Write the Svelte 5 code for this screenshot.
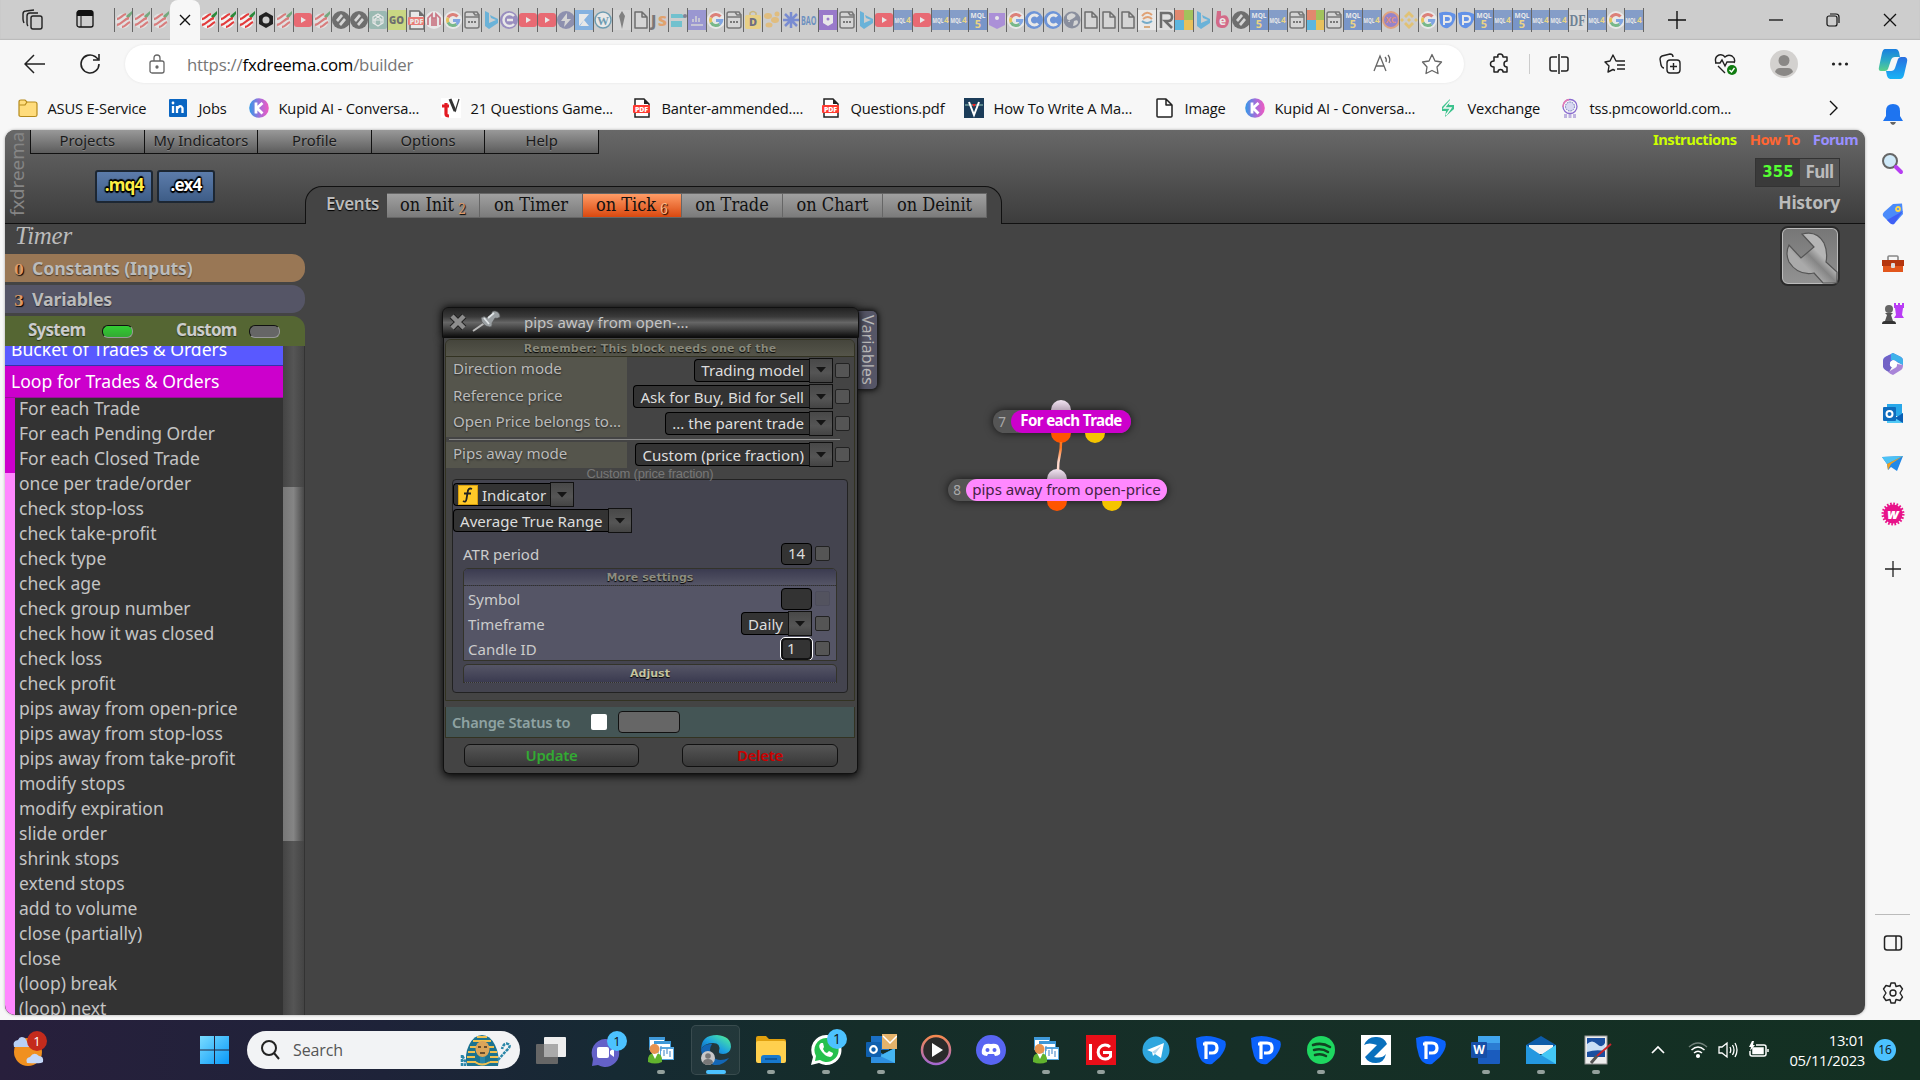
<script>

    let pinned = ['fx', 'fx', 'fx'];
    let tabs = [
        'fx!', 'fx!', 'fx!', 'hex!', 'fx', 'yt', 'fx', 'dia', 'dia', 'gpt', 'go', 'pdf', 'mm', 'g', 'win', 'bing',
        'cc', 'yt', 'yt', 'bolt', 'k', 'wp', 'torch', 'page', 'js', 'teal', 'chart', 'g', 'win', 'bag', 'beans',
        'snow', 'bao', 'shieldbox', 'win', 'bing', 'yt', 'mql4', 'yt', 'mql4', 'mql4', 'mql5', 'shield', 'g', 'c',
        'c', 'globe', 'page', 'page', 'page', 'swirl', 'r', 'ms', 'bing', 'e', 'dia', 'mql5', 'mql4', 'win', 'ms',
        'win', 'mql5', 'mql4', 'xc', 'bnb', 'g', 'p', 'p', 'mql5', 'mql4', 'mql5', 'mql4', 'mql4', 'df', 'mql4',
        'g', 'mql4'
    ];

    let bookmarks = [
        ['folder', 'ASUS E-Service'],
        ['linkedin', 'Jobs'],
        ['kupid', 'Kupid AI - Conversa...'],
        ['tv', '21 Questions Game...'],
        ['pdf', 'Banter-ammended....'],
        ['pdf', 'Questions.pdf'],
        ['v', 'How To Write A Ma...'],
        ['page', 'Image'],
        ['kupid', 'Kupid AI - Conversa...'],
        ['vex', 'Vexchange'],
        ['tss', 'tss.pmcoworld.com...']
    ];

    let menu = ['Projects', 'My Indicators', 'Profile', 'Options', 'Help'];

    let events = [
        { name: 'on Init', count: 2, width: 93 },
        { name: 'on Timer', width: 103 },
        { name: 'on Tick', count: 6, width: 99, active: true },
        { name: 'on Trade', width: 101 },
        { name: 'on Chart', width: 100 },
        { name: 'on Deinit', width: 104 }
    ];

    let blocks = [
        'For each Trade', 'For each Pending Order', 'For each Closed Trade', 'once per trade/order',
        'check stop-loss', 'check take-profit', 'check type', 'check age', 'check group number',
        'check how it was closed', 'check loss', 'check profit', 'pips away from open-price',
        'pips away from stop-loss', 'pips away from take-profit', 'modify stops', 'modify expiration',
        'slide order', 'shrink stops', 'extend stops', 'add to volume', 'close (partially)', 'close',
        '(loop) break', '(loop) next'
    ];

    let params = [
        ['Direction mode', 'Trading model'],
        ['Reference price', 'Ask for Buy, Bid for Sell'],
        ['Open Price belongs to...', '... the parent trade']
    ];

    let side = ['bell', 'magnifier', 'tag', 'toolbox', 'chess', 'm365', 'outlook', 'plane', 'w', 'plus'];

    let apps = [
        { icon: 'mt', open: true },
        { icon: 'edge', open: true, active: true },
        { icon: 'explorer', open: true },
        { icon: 'whatsapp', open: true, badge: 1 },
        { icon: 'outlookmail', open: true },
        { icon: 'play' },
        { icon: 'discord' },
        { icon: 'mt', open: true },
        { icon: 'ig', open: true },
        { icon: 'telegram' },
        { icon: 'pp' },
        { icon: 'pp' },
        { icon: 'spotify', open: true },
        { icon: 'z' },
        { icon: 'pp' },
        { icon: 'word', open: true },
        { icon: 'mail', open: true },
        { icon: 'paint', open: true }
    ];

    let candleId = 1;
    let atrPeriod = 14;

</script>

<style>
    :global(body) {
        margin: 0;
        overflow: hidden;
    }
    .desktop {
        width: 1920px;
        height: 1080px;
        display: flex;
        flex-direction: column;
        background: #f7f7f7;
        font-family: "Open Sans", "Noto Sans", sans-serif;
        overflow: hidden;
    }
    svg {
        display: block;
        flex: none;
    }

    /* browser tabs */
    .tabstrip {
        height: 40px;
        flex: none;
        display: flex;
        align-items: center;
        background: #cdcdcd;
        box-shadow: inset 0 -1px 1px #bbb;
    }
    .tabstrip .workspaces {
        display: flex;
        gap: 32px;
        width: 92px;
        padding-left: 22px;
    }
    .tab {
        width: 18.75px;
        height: 24px;
        box-sizing: border-box;
        border-right: 1px solid #666;
        display: flex;
        align-items: center;
        overflow: hidden;
        flex: none;
    }
    .tab.first {
        border-left: 1px solid #666;
    }
    .tab.last {
        border-right: 0;
    }
    .tab svg {
        opacity: .55;
    }
    .tab.loud svg {
        opacity: 1;
    }
    .current {
        width: 30px;
        height: 40px;
        border-radius: 8px 8px 0 0;
        background: #f7f7f7;
        display: flex;
        align-items: center;
        justify-content: center;
    }
    .window-buttons {
        display: flex;
        align-items: center;
        gap: 43px;
        margin-left: 83px;
    }
    .newtab {
        margin-left: 24px;
    }

    .browser {
        flex: none;
        height: 980px;
        display: flex;
    }
    .page {
        width: 1865px;
        display: flex;
        flex-direction: column;
    }
    .toolbar {
        height: 48px;
        display: flex;
        align-items: center;
        box-sizing: border-box;
    }
    .nav {
        width: 101px;
        padding-left: 24px;
        display: flex;
        gap: 34px;
    }
    .address {
        width: 1339px;
        height: 38px;
        border-radius: 19px;
        box-sizing: border-box;
        background: #fff;
        box-shadow: 0 0 3px rgba(0, 0, 0, .08);
        display: flex;
        align-items: center;
        padding: 0 21px 0 24px;
        font-size: 16.8px;
        color: #767676;
    }
    .address b {
        font-weight: 400;
        color: #000;
    }
    .address .url {
        flex: 1;
        margin-left: 22px;
        letter-spacing: -.22px;
    }
    .address .tools {
        display: flex;
        gap: 28px;
    }
    .actions {
        display: flex;
        align-items: center;
        margin-left: 25px;
    }
    .actions .rule {
        width: 1px;
        height: 20px;
        background: #ccc;
        margin: 0 18px;
    }
    .actions .spaced {
        display: flex;
        align-items: center;
        gap: 32.5px;
    }
    .bookmarks {
        height: 42px;
        box-sizing: border-box;
        display: grid;
        grid-template-columns: 151px 80px 192px 191px 189px 143px 191px 90px 193px 122px 269px 30px;
        padding: 0 0 3px 18px;
        align-items: center;
        font-size: 14.7px;
        letter-spacing: -.18px;
        color: #111;
        white-space: nowrap;
    }
    .bookmark {
        display: flex;
        align-items: center;
        gap: 9.5px;
    }

    /* edge side panel */
    .edgebar {
        width: 55px;
        display: flex;
        flex-direction: column;
        align-items: center;
        padding-top: 8px;
        box-sizing: border-box;
    }
    .edgebar .copilot {
        margin-bottom: 9px;
    }
    .edgebar .icon {
        height: 50px;
        display: flex;
        align-items: center;
    }
    .edgebar .icon.plus {
        height: 59px;
    }
    .edgebar .bottom {
        margin-top: auto;
        height: 106px;
        width: 35px;
        border-top: 1px solid #bbb;
        display: flex;
        flex-direction: column;
        align-items: center;
        gap: 29px;
        padding-top: 18px;
        box-sizing: border-box;
    }

    /* fxdreema builder */
    .app {
        position: relative;
        width: 1860px;
        height: 885px;
        margin-left: 5px;
        background: #444;
        border-radius: 10px;
        overflow: hidden;
        box-shadow: 0 0 3px rgba(0, 0, 0, .35);
        font-family: "Noto Sans", "Open Sans", sans-serif;
    }
    .header {
        display: grid;
        grid-template-columns: 25px 275px 697px 1fr;
        grid-template-rows: 24px 32px 38px;
        background: linear-gradient(#686868, #3c3c3c);
    }
    .logo {
        grid-row: 1 / 4;
        writing-mode: vertical-rl;
        transform: rotate(180deg);
        border-top: 1px solid #111;
        color: #858585;
        font-size: 18.8px;
        line-height: 25px;
        text-align: right;
        padding-bottom: 2px;
        box-sizing: border-box;
    }
    .menu {
        grid-column: 2 / 4;
        display: flex;
        border-left: 1px solid #111;
        width: 569px;
        box-sizing: border-box;
    }
    .menu div {
        flex: 1;
        border-right: 1px solid #111;
        border-bottom: 1px solid #111;
        background: linear-gradient(#999, #5c5c5c);
        color: #1a1a1a;
        text-shadow: 0 1px 0 rgba(255, 255, 255, .2);
        font-size: 14.8px;
        line-height: 21px;
        text-align: center;
    }
    .build {
        grid-column: 2;
        grid-row: 2 / 4;
        border-bottom: 1px solid #111;
        display: flex;
        gap: 4px;
        padding: 16px 0 0 65px;
    }
    .build div {
        width: 58px;
        height: 33px;
        box-sizing: border-box;
        border: 2px solid #1d2733;
        border-radius: 3px;
        background: linear-gradient(#5c7cab, #3e5d87);
        color: #fff;
        font-size: 17px;
        font-weight: 700;
        letter-spacing: -.8px;
        line-height: 26px;
        text-align: center;
        text-shadow: -1px -1px 1px #000, 1px -1px 1px #000, -1px 1px 1px #000, 1px 1px 1px #000, 0 2px 1px #000, 0 -2px 1px #000;
    }
    .build .source {
        color: #ffee44;
    }
    .events {
        grid-column: 3;
        grid-row: 3;
        display: flex;
        background: #444;
        border: solid #111;
        border-width: 1px 1px 0;
        border-radius: 17px 17px 0 0;
        padding: 6px 0 0 20px;
        box-sizing: border-box;
    }
    .events .title {
        width: 61px;
        color: #bbb;
        font-size: 17px;
        font-weight: 600;
        line-height: 22px;
        letter-spacing: -.3px;
        text-shadow: 0 1px 1px #000;
    }
    .event {
        height: 25px;
        box-sizing: border-box;
        border: 1px solid #666;
        border-left-width: 0;
        background: linear-gradient(#a0a0a0, #7b7b7b);
        color: #111;
        font-family: "DejaVu Serif Condensed", "DejaVu Serif", serif;
        font-stretch: condensed;
        font-size: 18px;
        line-height: 22px;
        text-align: center;
        white-space: nowrap;
        letter-spacing: 0;
    }
    .event.active {
        background: linear-gradient(#ff9c66, #d9480f);
    }
    .event small {
        font-size: 14px;
        color: #dd9966;
        position: relative;
        top: 3px;
        margin-left: 4px;
        text-shadow: 1px 1px 1px #000;
    }
    .event.active small {
        color: #ffbb88;
    }
    .account {
        grid-column: 4;
        grid-row: 1 / 4;
        border-bottom: 1px solid #111;
        display: flex;
        flex-direction: column;
        align-items: flex-end;
        font-weight: 700;
    }
    .links {
        display: flex;
        gap: 13px;
        padding: 0 7px 0 0;
        font-size: 14.7px;
        letter-spacing: -.5px;
        line-height: 19px;
        height: 28px;
        color: #ccff00;
    }
    .links .howto {
        color: #ff6633;
    }
    .links .forum {
        color: #9a90ff;
    }
    .credits {
        width: 85px;
        height: 29px;
        box-sizing: border-box;
        margin-right: 25px;
        border: 1px solid #333;
        background: #555;
        display: flex;
        color: #bbb;
        font-size: 17px;
        line-height: 26px;
    }
    .credits .left {
        width: 44px;
        background: #3a3a3a;
        color: #55ff33;
        font-family: "DejaVu Sans", sans-serif;
        font-weight: 700;
        font-size: 15px;
        text-align: center;
    }
    .credits .plan {
        flex: 1;
        text-align: center;
        letter-spacing: -.6px;
    }
    .history {
        margin-right: 25px;
        color: #bbb;
        font-size: 17.5px;
        line-height: 30px;
        letter-spacing: -.3px;
    }

    .sidebar {
        width: 300px;
        height: 791px;
        display: flex;
        flex-direction: column;
        color: #bbb;
    }
    .sidebar .project {
        height: 30px;
        padding-left: 10px;
        font-family: "Liberation Serif", serif;
        font-style: italic;
        font-size: 25px;
        line-height: 23px;
        letter-spacing: -.3px;
        box-sizing: border-box;
        flex: none;
    }
    .bar {
        height: 28px;
        margin-bottom: 3px;
        border-radius: 0 13px 13px 0;
        background: #997755;
        display: flex;
        align-items: center;
        padding: 0 0 1px 9px;
        box-sizing: border-box;
        font-weight: 700;
        font-size: 17.8px;
        letter-spacing: -.2px;
        text-shadow: 0 1px 1px rgba(0, 0, 0, .5);
        flex: none;
    }
    .bar .count {
        width: 18px;
        color: #dd9966;
        font-family: "DejaVu Serif", serif;
        font-weight: 700;
        font-size: 14px;
        margin-top: 4px;
        text-shadow: 1px 1px 1px #000;
    }
    .bar.vars {
        background: #555566;
    }
    .bar.libs {
        background: #556633;
        height: 30px;
        margin: 0;
        border-radius: 0 13px 0 0;
        padding-left: 23px;
        line-height: 28px;
        align-items: flex-start;
        font-size: 17px;
        letter-spacing: -.75px;
        color: #ccc;
    }
    .toggle {
        width: 31px;
        height: 13px;
        margin: 9px 48px 0 auto;
        box-sizing: border-box;
        border: 1px solid #111;
        border-right-color: #999;
        border-bottom-color: #999;
        border-radius: 6px;
        background: #666;
        flex: none;
    }
    .lib {
        display: flex;
        width: 153px;
        flex: none;
    }
    .lib.custom {
        width: 148px;
        margin-left: -5px;
    }
    .lib.custom .toggle {
        margin-right: 44px;
    }
    .toggle.on {
        background: linear-gradient(#33cc33, #33aa33);
    }
    .library {
        flex: 1;
        display: flex;
        overflow: hidden;
        border-right: 1px solid #333;
    }
    .list {
        width: 278px;
        color: #c4c4c4;
        font-size: 17.5px;
        background: #333;
    }
    .group {
        box-sizing: border-box;
        height: 32px;
        padding-left: 6px;
        line-height: 31px;
        font-size: 17.6px;
        color: #fff;
        background: #cc00cc;
        border-bottom: 1px solid #991199;
    }
    .group.bucket {
        height: 20px;
        line-height: 7px;
        background: #5959ff;
        border-bottom: 1px solid #3333aa;
        overflow: hidden;
    }
    .block {
        height: 25px;
        box-sizing: border-box;
        line-height: 20px;
        padding-left: 4px;
        border-left: 10px solid #ff88ff;
    }
    .block.loop {
        border-color: #cc00cc;
    }
    .scroll {
        width: 21px;
        background: linear-gradient(90deg, #444, #555 50%, #444);
        padding-top: 141px;
    }
    .thumb {
        height: 354px;
        background: linear-gradient(90deg, #777, #858585 50%, #484848);
    }

    .settings {
        position: absolute;
        left: 1775px;
        top: 96px;
    }

    /* parameters window */
    .dialog {
        position: absolute;
        left: 437px;
        top: 177px;
        width: 417px;
        color: #bbb;
        font-size: 15px;
    }
    .dialog .caption {
        height: 31px;
        box-sizing: border-box;
        border: 1px solid #111;
        border-radius: 6px 6px 0 0;
        background: linear-gradient(#222, #3a3a3a 30%, #666 50%, #3c3c3c 75%, #111);
        box-shadow: 0 0 8px #000;
        display: flex;
        align-items: center;
        padding: 0 0 1px 5px;
        line-height: 26px;
        position: relative;
        color: #c4c4c4;
        font-size: 15px;
    }
    .dialog .caption span {
        margin-left: 22px;
    }
    .dialog .body {
        margin: 0 1px;
        height: 436px;
        box-sizing: border-box;
        border: 1px solid #111;
        border-top: 0;
        border-radius: 0 0 6px 6px;
        background: #444;
        box-shadow: 0 2px 9px #000;
        position: relative;
        padding: 1px 2px 0 1px;
    }
    .vartab {
        position: absolute;
        left: 416px;
        top: 3px;
        width: 20px;
        height: 80px;
        box-sizing: border-box;
        border: 1px solid #222;
        border-left: 0;
        border-radius: 0 6px 6px 0;
        background: #555566;
        box-shadow: 0 0 6px #000;
        writing-mode: vertical-rl;
        text-align: center;
        line-height: 18px;
        font-size: 16.3px;
    }
    .panel {
        height: 362px;
        box-sizing: border-box;
        border: 1px solid #333322;
        border-radius: 6px 6px 0 0;
        overflow: hidden;
    }
    .note {
        height: 17px;
        box-sizing: border-box;
        border-bottom: 1px solid #333322;
        background: linear-gradient(#45453c, #55554a);
        color: #8a8a7c;
        font: 700 11px/17px "DejaVu Sans", sans-serif;
        letter-spacing: .18px;
        text-align: center;
        text-shadow: 0 1px 1px #000;
    }
    .row {
        height: 26.5px;
        display: flex;
        align-items: center;
        padding-right: 4px;
        gap: 2px;
    }
    .row .label {
        width: 181px;
        height: 100%;
        box-sizing: border-box;
        padding-left: 7px;
        line-height: 23px;
        background: #55554c;
        margin-right: auto;
        text-shadow: 0 1px 2px #222;
        font-size: 15.1px;
        letter-spacing: -.05px;
        white-space: nowrap;
        overflow: hidden;
    }
    .line {
        height: 1px;
        margin: 2px 14px 2px 3px;
        background: #888;
    }
    .select {
        display: flex;
        align-items: center;
        color: #ddd;
    }
    .select .value {
        height: 23px;
        box-sizing: border-box;
        border: 1px solid #000;
        border-right: 0;
        border-radius: 4px 0 0 4px;
        background: #333;
        padding: 0 5px 0 6px;
        line-height: 20px;
        display: flex;
        align-items: center;
        gap: 4px;
        font-size: 15.1px;
        white-space: nowrap;
    }
    .select .value.with-icon {
        padding: 0 4px;
    }
    .select .arrow {
        width: 24px;
        height: 25px;
        box-sizing: border-box;
        border: 1px solid #111;
        background: linear-gradient(#484848, #555 60%, #444);
        display: flex;
        align-items: center;
        justify-content: center;
    }
    .check {
        width: 15px;
        height: 15px;
        box-sizing: border-box;
        border: 1px solid #222;
        border-radius: 2px;
        background: #555;
    }
    .hint {
        height: 11px;
        color: #777;
        font: 13px/11px "Liberation Sans", sans-serif;
        letter-spacing: -.2px;
        text-align: center;
    }
    .inner {
        margin: 0 6px;
        height: 214px;
        box-sizing: border-box;
        border: 1px solid #222;
        border-radius: 4px;
        background: #44444f;
        color: #ccc;
        font-size: 15px;
    }
    .inner .select {
        margin-top: 3px;
        height: 23px;
    }
    .field {
        height: 25px;
        display: flex;
        align-items: center;
        gap: 3px;
        padding: 0 6px 0 4px;
    }
    .field span {
        margin-right: auto;
    }
    .field .select {
        margin: 0;
    }
    .field.first {
        height: 25px;
        margin: 9px 10px 0;
        padding: 0 7px 0 0;
    }
    .field .num {
        width: 31px;
        height: 22px;
        box-sizing: border-box;
        border: 1px solid #000;
        border-radius: 4px;
        background: #333;
        color: #ddd;
        padding: 0 0 0 6px;
        line-height: 19px;
    }
    .field .num.focus {
        border: 2px solid #111;
        outline: 1.5px solid #fff;
        padding-left: 4px;
        line-height: 17px;
    }
    .field .check.dim {
        background: #53535f;
        border-color: #4d4d5c;
    }
    .more {
        margin: 2px 10px 3px;
        border: 1px solid #33332a;
        border-radius: 5px 5px 0 0;
        background: #555566;
        height: 93px;
        box-sizing: border-box;
        overflow: hidden;
    }
    .strip {
        height: 17px;
        box-sizing: border-box;
        border-bottom: 1px dotted #33332a;
        background: linear-gradient(#3b3b50, #555566);
        color: #8d8d80;
        font: 700 11px/18px "DejaVu Sans", sans-serif;
        letter-spacing: .1px;
        text-align: center;
        text-shadow: 0 1px 1px #000;
    }
    .adjust {
        margin: 0 10px;
        height: 19px;
        border: 1px solid #33332a;
        border-bottom-style: dotted;
        border-radius: 5px 5px 0 0;
        background: linear-gradient(#555566, #3b3b50);
        color: #c4c4a0;
        letter-spacing: 0;
    }
    .status {
        margin-top: 6px;
        height: 31px;
        box-sizing: border-box;
        border: 1px solid #333322;
        border-top: 0;
        background: #445555;
        display: flex;
        align-items: center;
        padding: 0 0 1px 6px;
        color: #8fa3a3;
        font-weight: 600;
        font-size: 14.6px;
        letter-spacing: -.2px;
    }
    .status .tick {
        width: 16px;
        height: 16px;
        border-radius: 2px;
        background: #fff;
        margin: 0 11px 0 21px;
    }
    .status .text {
        width: 62px;
        height: 22px;
        box-sizing: border-box;
        border: 1px solid #111;
        border-radius: 4px;
        background: #666;
    }
    .buttons {
        display: flex;
        justify-content: space-between;
        padding: 6px 17px 0 19px;
    }
    .buttons div {
        width: 175px;
        height: 23px;
        box-sizing: border-box;
        border: 1px solid #111;
        border-radius: 6px;
        background: linear-gradient(#555, #383838);
        text-align: center;
        line-height: 20px;
        color: #33aa33;
        font-weight: 600;
        letter-spacing: -.3px;
    }
    .buttons .delete {
        width: 156px;
        color: #cc0000;
    }

    /* block diagram */
    .wire {
        position: absolute;
        left: 900px;
        top: 260px;
    }
    .node {
        position: absolute;
        display: flex;
        align-items: center;
        height: 23px;
        border-radius: 12px;
        background: #555;
        color: #aaa;
        font-size: 13.5px;
        box-shadow: 0 0 9px rgba(0, 0, 0, .7);
    }
    .node .number {
        width: 18px;
        text-align: center;
    }
    .node .name {
        flex: 1;
        height: 100%;
        border-radius: 12px;
        text-align: center;
        line-height: 21px;
        font-size: 15.1px;
    }
    .node7 {
        left: 988px;
        top: 280px;
        width: 138px;
    }
    .node7 .name {
        background: #cc00cc;
        color: #fff;
        font-weight: 700;
        letter-spacing: -.6px;
    }
    .node8 {
        left: 943px;
        top: 349px;
        width: 219px;
        height: 22px;
    }
    .node8 .name {
        background: #ff88ff;
        color: #442244;
        line-height: 20px;
    }

    /* windows taskbar */
    .taskbar {
        height: 60px;
        display: flex;
        align-items: center;
        background: linear-gradient(90deg, #281f3c, #1e2339 20%, #162a33 32%, #152d29 45%, #162f27 65%, #133022);
        color: #fff;
    }
    .weather {
        width: 200px;
        padding-left: 12px;
        box-sizing: border-box;
    }
    .search {
        width: 273px;
        height: 38px;
        margin-left: 18px;
        border-radius: 19px;
        background: #f2f3f5;
        box-sizing: border-box;
        display: flex;
        align-items: center;
        padding: 0 8px 0 12px;
        color: #555;
        font-size: 16px;
        letter-spacing: -.1px;
    }
    .search span {
        margin: 0 auto 0 12px;
    }
    .taskview {
        margin: 0 25px 0 16px;
    }
    .chat {
        margin-right: 4px;
    }
    .program {
        width: 55px;
        height: 50px;
        flex: none;
        display: flex;
        justify-content: center;
        align-items: center;
        position: relative;
    }
    .program.active::before {
        content: '';
        position: absolute;
        left: 3px;
        top: 0;
        width: 47px;
        height: 48px;
        border: 1px solid rgba(255, 255, 255, .1);
        border-radius: 5px;
        background: rgba(255, 255, 255, .06);
    }
    .program svg {
        position: relative;
    }
    .program .dot {
        position: absolute;
        left: 24px;
        bottom: 1px;
        width: 8px;
        height: 4px;
        border-radius: 2px;
        background: #93a09c;
    }
    .program.active .dot {
        left: 18px;
        width: 20px;
        background: #4cc2ff;
    }
    .badge {
        position: absolute;
        right: 6px;
        top: 4px;
        width: 20px;
        height: 20px;
        border-radius: 10px;
        background: #4cc2ff;
        color: #111;
        font-size: 14px;
        line-height: 20px;
        text-align: center;
    }
    .tray {
        display: flex;
        align-items: center;
        gap: 10px;
        margin-left: 28px;
    }
    .tray .more-icons {
        margin-right: 13px;
    }
    .clock {
        width: 86px;
        text-align: right;
        font-size: 14.8px;
        line-height: 20px;
        letter-spacing: -.3px;
    }
    .bubble {
        width: 22px;
        height: 22px;
        margin-left: -1px;
        border-radius: 11px;
        background: #4cc2ff;
        color: #111;
        font-size: 12px;
        line-height: 22px;
        text-align: center;
    }
</style>

{#snippet pdf()}
    <path d="M3 1H12L17 6V19H3z" fill="#fff" stroke="#222" stroke-width="1.500" /><path d="M12 1V6H17" fill="#222" /><rect x="1" y="7" width="17" height="8" rx="1" fill="#ff3b30" /><text x="9.500" y="14" text-anchor="middle" font-size="7" font-weight="800" fill="#fff">PDF</text>
{/snippet}

{#snippet fav(kind)}
    <svg width="18" height="20" viewBox="0 0 18 20">
        {#if kind === 'fx'}
            <circle cx="8" cy="11" r="7.500" fill="#f2f2f2" />
            <path d="M11 6 17 1 17 4 13 9z" fill="#2a8a3a" />
            <path d="M2 9C5 9 7 5 11 4M2 15C7 14 9 9 14 8M7 17C10 17 12 13 15 12" stroke="#e23c3c" stroke-width="2.300" fill="none" />
        {:else if kind === 'hex'}
            <path d="M9 2 16 6V14L9 18 2 14V6z" fill="#222" /><circle cx="9" cy="10" r="3.500" fill="#cdcdcd" />
        {:else if kind === 'yt'}
            <rect y="3" width="18" height="14" rx="3" fill="#ff1a2a" /><path d="M7 7v6l5-3z" fill="#fff" />
        {:else if kind === 'dia'}
            <circle cx="9" cy="10" r="9" fill="#222" /><path d="M9 4 4 10 6 12 11 6zM12 8 7 14 9 16 14 10z" fill="#ddd" />
        {:else if kind === 'gpt'}
            <rect y="1" width="18" height="18" rx="2" fill="#74aa9c" />
            <path d="M9 4 14 7V13L9 16 4 13V7zM6 5l6 4v6M12 5 6 9v6M4 10h10" fill="none" stroke="#fff" stroke-width="1.200" />
        {:else if kind === 'go'}
            <rect width="18" height="20" fill="#c8e048" /><text x="1" y="14" font-size="11" font-weight="800" textLength="15" lengthAdjust="spacingAndGlyphs" fill="#222">GO</text>
        {:else if kind === 'pdf'}
            {@render pdf()}
        {:else if kind === 'mm'}
            <circle cx="9" cy="10" r="9" fill="#fff" /><path d="M3 15V8L7 4V16M11 16V4L15 8V15M7 8h4M9 8v8" stroke="#c8324b" stroke-width="1.700" fill="none" />
        {:else if kind === 'g'}
            <circle cx="9" cy="10" r="9" fill="#fff" />
            <g fill="none" stroke-width="3"><path d="M13.500 6.500A5.700 5.700 0 0 0 4 7.500" stroke="#ea4335" /><path d="M4 7.500A6 6 0 0 0 4 12.500" stroke="#fbbc05" /><path d="M4 12.500A5.700 5.700 0 0 0 12.500 14.300" stroke="#34a853" /><path d="M12.500 14.300A5.600 5.600 0 0 0 14.700 10.500H9" stroke="#4285f4" /></g>
        {:else if kind === 'win'}
            <path d="M2 4q0-2 2-2h6l2 3h4v11q0 2-2 2H4q-2 0-2-2zM2 7h14M10 2h4l2 3" fill="#ddd" stroke="#333" stroke-width="1.500" />
            <path d="M5 12h2M8 12h2M11 12h2" stroke="#333" stroke-width="2" />
        {:else if kind === 'bing'}
            <path d="M3 1 7 3V13L14 10 9 8 8 5 16 9V13L7 19 3 16z" fill="#1b9de2" />
        {:else if kind === 'cc'}
            <circle cx="9" cy="10" r="9" fill="#705bb5" /><path d="M14 6A6 6 0 1 0 14 14M13 10H7" stroke="#fff" stroke-width="2.500" fill="none" />
        {:else if kind === 'bolt'}
            <circle cx="9" cy="10" r="9" fill="#5a5f96" /><path d="M10 3 4 11H8L7 17 14 9H10z" fill="#ddd" />
        {:else if kind === 'k'}
            <rect width="18" height="20" fill="#4d9cf0" /><path d="M4 4H14L4 16zM9 10 14 16H5" fill="#fff" />
        {:else if kind === 'wp'}
            <circle cx="9" cy="10" r="8" fill="#fff" stroke="#21759b" stroke-width="1.500" /><text x="9" y="14.500" text-anchor="middle" font-size="12" font-weight="700" font-family="Liberation Serif" fill="#21759b">W</text>
        {:else if kind === 'torch'}
            <rect width="18" height="20" fill="#ddd" /><path d="M9 1 12 6 11 10 9 19 7 10 6 6z" fill="#444" />
        {:else if kind === 'page'}
            <path d="M3 2H10L15 7V18H3zM10 2V7H15" fill="#ddd" stroke="#222" stroke-width="1.500" stroke-linejoin="round" />
        {:else if kind === 'js'}
            <text x="1" y="16" font-size="15" font-weight="800" fill="#333">J</text><text x="8" y="16" font-size="14" font-weight="800" textLength="9" lengthAdjust="spacingAndGlyphs" fill="#f08020">S</text>
        {:else if kind === 'teal'}
            <path d="M2 4H13L16 8H2zM2 11H13V17H2z" fill="#29b9d0" /><circle cx="16" cy="6" r="2" fill="#446" />
        {:else if kind === 'chart'}
            <rect width="18" height="20" fill="#726bd5" /><path d="M3 15H15M5 12V9M8 12V6M11 12V8" stroke="#ddd" stroke-width="1.500" />
        {:else if kind === 'bag'}
            <path d="M6 6V3Q9 0 12 3V6" fill="none" stroke="#caa53a" stroke-width="1.500" /><rect x="1" y="5" width="16" height="14" rx="2" fill="#ffd34d" /><text x="9" y="16" text-anchor="middle" font-size="11" font-weight="800" fill="#224">D</text>
        {:else if kind === 'beans'}
            <g fill="#f0b040"><ellipse cx="5" cy="6" rx="4" ry="3" /><ellipse cx="12" cy="10" rx="4" ry="3" /><ellipse cx="6" cy="15" rx="3.500" ry="2.500" /><circle cx="14" cy="4" r="2.500" /></g>
        {:else if kind === 'snow'}
            <path d="M9 2V18M1 10H17M3 4 15 16M15 4 3 16" stroke="#3557d6" stroke-width="2.500" />
        {:else if kind === 'bao'}
            <text x="1" y="15" font-size="13" font-weight="700" textLength="15.500" lengthAdjust="spacingAndGlyphs" fill="#1b60b5">BAO</text>
        {:else if kind === 'shieldbox'}
            <rect width="18" height="20" fill="#7038c8" /><path d="M4 5H14V13L9 16 4 13z" fill="#fff" /><circle cx="9" cy="9" r="1.500" fill="#7038c8" />
        {:else if kind === 'shield'}
            <path d="M1 3H17V15L9 19 1 15z" fill="#9060e0" /><circle cx="9" cy="8" r="2" fill="#fff" />
        {:else if kind === 'mql4'}
            <rect width="18" height="20" fill="#4a76c4" /><text x=".5" y="13" font-size="7" font-weight="700" textLength="11" lengthAdjust="spacingAndGlyphs" fill="#fff">MQL</text><text x="12" y="13" font-size="8.500" font-weight="700" fill="#ffd84d">4</text>
        {:else if kind === 'mql5'}
            <rect width="18" height="20" fill="#3368c4" /><text x="9" y="8" text-anchor="middle" font-size="7.500" font-weight="700" textLength="15" lengthAdjust="spacingAndGlyphs" fill="#fff">MQL</text><text x="9" y="18" text-anchor="middle" font-size="11" font-weight="700" fill="#ffd84d">5</text>
        {:else if kind === 'c'}
            <circle cx="9" cy="10" r="9" fill="#1f66e0" /><path d="M13 6.500A5 5 0 1 0 13 13.500" stroke="#fff" stroke-width="3" fill="none" />
        {:else if kind === 'globe'}
            <circle cx="9" cy="10" r="8.500" fill="#555e78" /><path d="M4 6Q7 2 11 4T9 9 6 12 4 9zM11 11Q15 9 15 12T10 16z" fill="#ddd" />
        {:else if kind === 'swirl'}
            <rect width="18" height="20" fill="#fff" /><path d="M4 6Q9 0 14 5M5 9Q10 5 14 9" stroke="#f08030" stroke-width="2" fill="none" /><path d="M4 11Q9 15 14 11" stroke="#2f90c5" stroke-width="2" fill="none" /><path d="M6 17H12" stroke="#e09040" stroke-width="2" />
        {:else if kind === 'r'}
            <rect width="18" height="20" fill="#eee" /><path d="M4 18V3H11Q15 3 15 7T11 11H8L15 18" stroke="#222" stroke-width="2.500" fill="none" />
        {:else if kind === 'ms'}
            <path d="M0 0H9V10H0z" fill="#f25022" /><path d="M9 0H18V10H9z" fill="#7fba00" /><path d="M0 10H9V20H0z" fill="#00a4ef" /><path d="M9 10H18V20H9z" fill="#ffb900" />
        {:else if kind === 'e'}
            <path d="M4 1H8V6Q15 3 16 11 15 19 8 18 2 17 3 10z" fill="#d81b50" /><text x="9.500" y="15" text-anchor="middle" font-size="12" font-weight="700" fill="#fff">e</text>
        {:else if kind === 'xc'}
            <circle cx="9" cy="10" r="8" fill="#6847c8" stroke="#f08040" stroke-width="2" /><text x="9" y="13" text-anchor="middle" font-size="8" font-weight="700" fill="#f06040">XC</text>
        {:else if kind === 'bnb'}
            <path d="M9 1 14 6 12 8 9 5 6 8 4 6zM9 19 14 14 12 12 9 15 6 12 4 14zM2 8 4 10 2 12 0 10zM16 8 18 10 16 12 14 10zM9 8 11 10 9 12 7 10z" fill="#f3ba2f" />
        {:else if kind === 'p'}
            <path d="M1 3Q9 0 17 4 19 8 14 15L10 18Q4 19 2 13z" fill="#0e62fe" /><path d="M6 15V6H10Q13 6 13 9T10 12H6" stroke="#fff" stroke-width="2" fill="none" />
        {:else if kind === 'df'}
            <rect width="18" height="20" fill="#e4e4e4" /><text x=".5" y="16" font-size="16" font-weight="700" font-family="Liberation Serif" textLength="16" lengthAdjust="spacingAndGlyphs" fill="#246">DF</text>
        {/if}
    </svg>
{/snippet}

{#snippet mark(kind)}
    <svg width="20" height="20" viewBox="0 0 20 20">
        {#if kind === 'folder'}
            <path d="M1 4Q1 2 3 2H7L9 4H17Q19 4 19 6V17Q19 18.500 17 18.500H3Q1 18.500 1 17z" fill="#ffdc7c" stroke="#b58a1b" stroke-width="1.200" /><path d="M1.500 7H7L9 4" stroke="#b58a1b" stroke-width="1.200" fill="none" />
        {:else if kind === 'linkedin'}
            <rect y="1" width="18" height="18" rx="1" fill="#0a66c2" /><path d="M4 8V15M8 15V8M8 11Q11 6 13.500 10V15" stroke="#fff" stroke-width="2.300" fill="none" /><circle cx="4" cy="5" r="1.400" fill="#fff" />
        {:else if kind === 'kupid'}
            <defs><linearGradient id="kupid"><stop offset="0" stop-color="#3399e8" /><stop offset=".6" stop-color="#b06ad8" /><stop offset="1" stop-color="#f05ac0" /></linearGradient></defs>
            <circle cx="10" cy="10" r="9.800" fill="url(#kupid)" /><path d="M7 4.500V15.500M13.500 5 8 10 13.500 15.500" stroke="#fff" stroke-width="2.800" fill="none" />
        {:else if kind === 'tv'}
            <rect width="20" height="20" fill="#fff" /><path d="M1 8H8M5 5V16Q5 18 8 18" stroke="#e31b23" stroke-width="3.200" fill="none" /><path d="M9 1 14 13" stroke="#333" stroke-width="3" /><path d="M14 14 18 1" stroke="#333" stroke-width="1.200" />
        {:else if kind === 'pdf'}
            {@render pdf()}
        {:else if kind === 'v'}
            <rect width="20" height="20" fill="#1b3c59" /><path d="M1 7H19" stroke="#9cb" /><path d="M5 4 10 17 15 4" stroke="#fff" stroke-width="2" fill="none" /><path d="M8 6H12L10 9z" fill="#e22" />
        {:else if kind === 'page'}
            <path d="M2 1.500Q2 1 3 1H11L17 7V18Q17 19 16 19H3Q2 19 2 18zM11 1V7H17" fill="#fff" stroke="#222" stroke-width="1.500" stroke-linejoin="round" />
        {:else if kind === 'vex'}
            <path d="M12 1 4 9V13H8L7 19 16 11V7H11z" fill="#3cc28d" /><path d="M12 3 6 10H13L8 17" stroke="#f7f7f7" stroke-width="1.300" fill="none" />
        {:else}
            <circle cx="10" cy="8.500" r="7" fill="none" stroke="#8a6bd0" stroke-width="1.300" /><circle cx="10" cy="8.500" r="4.500" fill="#d8d8f2" stroke="#6870b8" stroke-dasharray="1.500 1" /><path d="M4 17H16M4 19H16" stroke="#8870c8" stroke-dasharray="3 1.500" /><path d="M3 9Q3 3 9 1.500" stroke="#e77ab5" stroke-width="1.300" fill="none" />
        {/if}
    </svg>
{/snippet}

{#snippet sideIcon(kind)}
    <svg width="24" height="24" viewBox="0 0 24 24">
        {#if kind === 'bell'}
            <path d="M12 2Q19 2 19 9V14L22 19H2L5 14V9Q5 2 12 2z" fill="#1e74f0" /><path d="M9 20H15Q14 23 12 23T9 20z" fill="#666" />
        {:else if kind === 'magnifier'}
            <circle cx="9" cy="9" r="7" fill="#cfe9f8" stroke="#666" stroke-width="2" /><path d="M15 15 20 20" stroke="#b63df2" stroke-width="4" stroke-linecap="round" />
        {:else if kind === 'tag'}
            <path d="M12 2 21 1.500 22 12 13 22Q11 23 9 21L2 14Q1 12 3 10z" fill="#4b8bfa" /><path d="M22 9 13 22Q11 23 9 21L6 18z" fill="#3f5ff5" /><circle cx="17" cy="7" r="2" fill="none" stroke="#ffd94a" stroke-width="1.800" />
        {:else if kind === 'toolbox'}
            <path d="M7 8V5Q7 4 8 4H16Q17 4 17 5V8" fill="none" stroke="#888" stroke-width="1.600" /><path d="M1 8H23V14H1z" fill="#b5360e" /><path d="M2 14H22V20H2z" fill="#e2561c" /><rect x="10" y="11" width="4" height="5" rx="1" fill="#ddd" />
        {:else if kind === 'chess'}
            <path d="M13 1H15V3H17V1H19V3H21V1H23V6H22L21 13 23 16H13L15 13 14 6H13z" fill="#b93cf5" /><circle cx="8" cy="7" r="4" fill="#666" /><path d="M4 11H12L10 13 12 19H4L6 13z" fill="#555" /><path d="M1 22Q1 19 4 19H12Q15 19 15 22z" fill="#333" />
        {:else if kind === 'm365'}
            <path d="M12 1 20 5Q22 6 22 9V13L16 10Q15 8 12 8 9 9 9 12L2 15V9Q2 6 4 5z" fill="#5a68e0" /><path d="M12 1 20 5Q22 6 22 9V13L13 8 10 8V2z" fill="#3fb2ea" /><path d="M22 13Q22 17 20 18L12 23Q9 22 7 20L14 16Q16 15 16 12z" fill="#a985d8" /><path d="M2 10V15Q3 18 8 20L11 15Q8 14 9 10L9 3Q2 5 2 10z" fill="#7262c5" /><circle cx="12.500" cy="12" r="3.500" fill="#fff" />
        {:else if kind === 'outlook'}
            <rect x="6" y="2" width="15" height="12" fill="#28a8ea" /><path d="M6 12 14 16 22 11V21H6z" fill="#50c8f5" /><path d="M22 11 14 16 22 21z" fill="#0a5fb5" /><rect x="2" y="5" width="13" height="14" rx="1" fill="#0f6cbd" /><circle cx="8.500" cy="12" r="3" fill="none" stroke="#fff" stroke-width="2" />
        {:else if kind === 'plane'}
            <path d="M1 5 22 4 16 19 10 15 7 18 6 12z" fill="#2088e8" /><path d="M1 5 22 4 6 12z" fill="#4cc2f5" /><path d="M22 4 6 12 7 18 10 12z" fill="#f0a020" />
        {:else if kind === 'w'}
            <circle cx="12" cy="12" r="9.500" fill="#e8138a" /><circle cx="12" cy="12" r="10" fill="none" stroke="#e8138a" stroke-width="3" stroke-dasharray="1.600 1.540" /><text x="12" y="17" text-anchor="middle" font-size="14" font-style="italic" font-weight="800" fill="#fff">w</text>
        {:else}
            <path d="M4 12H20M12 4V20" stroke="#222" stroke-width="1.300" />
        {/if}
    </svg>
{/snippet}

{#snippet program(kind)}
    <svg width="32" height="32" viewBox="0 0 32 32">
        {#if kind === 'mt'}
            <rect x="4" y="3" width="16" height="13" fill="#3e98d8" /><rect x="5" y="6" width="14" height="9" fill="#fff" /><rect x="9" y="7" width="17" height="16" fill="#3e98d8" /><rect x="10" y="10" width="15" height="12" fill="#fff" /><rect x="15" y="13" width="14" height="13" fill="#57a8e0" /><rect x="16" y="15" width="12" height="10" fill="#fff" /><path d="M13 14V19M16 12V17M19 16V22M22 14V20M25 17V23" stroke="#5a96d0" stroke-width="1.200" fill="none" /><path d="M3 28Q2 19 10 19T17 28Q10 31 3 28z" fill="#62b32e" /><path d="M7 19 10 25 13 19z" fill="#fff" /><circle cx="9.500" cy="15" r="5" fill="#e8934f" />
        {:else if kind === 'edge'}
            <defs><linearGradient id="edge" x1="0" y1="1" x2="1" y2="0"><stop offset="0" stop-color="#0c59a4" /><stop offset=".45" stop-color="#1b9de2" /><stop offset=".8" stop-color="#3fd8b0" /><stop offset="1" stop-color="#7be04e" /></linearGradient></defs>
            <path d="M1 16Q1 1 17 1 31 2 31 13 30 20 23 20 18 20 19 17 21 9 13 9 4 9 1 16z" fill="url(#edge)" /><path d="M1 16Q4 9 12 10 8 16 12 22 18 29 29 24 23 32 14 31 2 28 1 16z" fill="#1366b5" /><circle cx="8" cy="24" r="7" fill="#c8c8c8" /><circle cx="8" cy="22" r="2.800" fill="#777" /><path d="M3 29Q3 25 8 25T13 29Q8 33 3 29z" fill="#777" />
        {:else if kind === 'explorer'}
            <path d="M1 4Q1 2 3 2H11L14 5H29Q31 5 31 7V12H1z" fill="#e0a00e" /><path d="M1 9Q1 7 3 7H29Q31 7 31 9V27Q31 29 29 29H3Q1 29 1 27z" fill="#ffd04e" /><path d="M6 29V24Q6 21 9 21H23Q26 21 26 24V29z" fill="#1779ce" /><path d="M10 25H22" stroke="#0a4c8c" stroke-width="1.500" />
        {:else if kind === 'whatsapp'}
            <path d="M16 1A15 15 0 1 1 9 29L1 31 3 23A15 15 0 0 1 16 1z" fill="#fff" /><path d="M16 4A12 12 0 1 1 10 26L5 27 6 22A12 12 0 0 1 16 4z" fill="#25c04d" /><path d="M11 9Q8 11 10 15 14 22 20 23 23 22 23 19L19 17 17 19Q14 18 13 15L14 13 13 9z" fill="#fff" />
        {:else if kind === 'outlookmail'}
            <rect x="6" y="2" width="18" height="14" fill="#1a6fc4" /><path d="M6 14 18 20 30 14V29H6z" fill="#2e8fe0" /><path d="M30 14 15 22 30 29z" fill="#45b5f2" /><rect x="1" y="8" width="15" height="15" rx="1" fill="#0f5fae" /><circle cx="8.500" cy="15.500" r="3.300" fill="none" stroke="#fff" stroke-width="2.200" /><rect x="17" y="0" width="15" height="15" fill="#e5b36b" /><path d="M18 2 25 9 32 2" stroke="#fff" stroke-width="1.500" fill="none" />
        {:else if kind === 'play'}
            <defs><linearGradient id="play" x1="0" y1="0" x2="0" y2="1"><stop offset="0" stop-color="#f5894f" /><stop offset="1" stop-color="#a468d0" /></linearGradient></defs>
            <circle cx="16" cy="16" r="14" fill="#2b2b2b" stroke="url(#play)" stroke-width="2.500" /><path d="M12 9V23L23 16z" fill="#fff" />
        {:else if kind === 'discord'}
            <circle cx="16" cy="16" r="15" fill="#5865f2" /><path d="M9 11Q12 9 16 10 20 9 23 11 26 16 25 20 23 22 20 22L19 20H13L12 22Q9 22 7 20 6 16 9 11z" fill="#fff" /><circle cx="12.500" cy="16" r="2" fill="#5865f2" /><circle cx="19.500" cy="16" r="2" fill="#5865f2" />
        {:else if kind === 'ig'}
            <rect x="1" y="1" width="30" height="30" fill="#e90e18" /><path d="M5.500 10V26M25 13A7 7 0 1 0 25.500 22.500V18.500H18" stroke="#fff" stroke-width="3" fill="none" />
        {:else if kind === 'telegram'}
            <circle cx="16" cy="16" r="13.500" fill="#2fa6de" /><path d="M7 16 24 9 21 24 15 20 13 22 12 18z" fill="#fff" /><path d="M12 18 21 12 15 20z" fill="#b5d8ee" />
        {:else if kind === 'pp'}
            <path d="M1 4Q14-1 30 7 33 13 25 23L17 30Q8 32 4 22 1 13 1 4z" fill="#0b62fb" /><path d="M11 25V9H17Q22 9 22 14T17 19H14M8 10H12" stroke="#fff" stroke-width="3.200" fill="none" />
        {:else if kind === 'spotify'}
            <circle cx="16" cy="16" r="14" fill="#1ed760" /><path d="M8 11Q17 8 25 13M9 16Q17 14 23 18M10 21Q16 19 21 22" stroke="#142" stroke-width="2.500" fill="none" stroke-linecap="round" />
        {:else if kind === 'z'}
            <rect x="1" y="1" width="30" height="30" fill="#fff" /><path d="M4 11Q8 2 17 3 24 3 27 10L14 23Q22 25 26 20 24 29 16 29 8 29 5 23L17 11Q9 8 4 11z" fill="#0870bd" />
        {:else if kind === 'word'}
            <rect x="8" y="2" width="22" height="28" rx="1" fill="#1a5cbe" /><path d="M8 2H30V9H8z" fill="#41a5ee" /><path d="M8 9H30V16H8z" fill="#2b7cd3" /><rect x="1" y="8" width="16" height="16" rx="1" fill="#174fa8" /><text x="9" y="20" text-anchor="middle" font-size="12" font-weight="700" fill="#fff">W</text>
        {:else if kind === 'mail'}
            <path d="M1 11 16 2 31 11V20H1z" fill="#0d5ba8" /><path d="M4 11H28V20H4z" fill="#f4f4f4" /><path d="M1 11 16 21 31 11V30H1z" fill="#2498e0" /><path d="M31 11V30L16 21z" fill="#43c8f5" />
        {:else}
            <rect x="5" y="2" width="22" height="28" fill="#eee" stroke="#999" /><rect x="7" y="4" width="18" height="19" fill="#1b4fa0" /><path d="M7 10Q12 5 17 10T25 9V17Q16 15 7 18z" fill="#c9def5" /><path d="M31 10 17 22" stroke="#c8242b" stroke-width="2" /><path d="M17 22 11 29" stroke="#555" stroke-width="3" />
        {/if}
    </svg>
{/snippet}

{#snippet select(value, icon)}
    <div class="select">
        <div class="value" class:with-icon={icon}>
            {#if icon}
                <svg width="20" height="20" viewBox="0 0 20 20"><rect width="20" height="20" fill="#d89f10" /><rect x="1" y="1" width="18" height="18" fill="#ffc928" /><path d="M14 4Q10 2 9.500 8L8.500 14Q8 18 5 16M6 8.500H13" stroke="#222" stroke-width="1.800" fill="none" /></svg>
            {/if}
            {value}
        </div>
        <div class="arrow"><svg width="10" height="6" viewBox="0 0 10 6"><path d="M0 0H10L5 5.500z" fill="#151515" /></svg></div>
    </div>
{/snippet}

<div class="desktop">
    <div class="tabstrip">
        <div class="workspaces">
            <svg width="22" height="22" viewBox="0 0 22 22" fill="none" stroke="#222" stroke-width="1.400"><rect x="9" y="7" width="11" height="13" rx="2" /><path d="M6 17Q5 16 5 14V7Q5 4 8 4H16M2 14Q1 12 1 10V5Q1 2 4 2L12 1" /></svg>
            <svg width="18" height="20" viewBox="0 0 18 20"><rect x="1" y="2" width="16" height="16" rx="2" fill="none" stroke="#111" stroke-width="1.300" /><path d="M1 7V4Q1 1 4 1H14Q17 1 17 4V7z" fill="#111" /><path d="M5 7V18" stroke="#111" /></svg>
        </div>
        {#each pinned as kind, i}
            <div class="tab" class:first={i === 0} class:last={i === 2}>{@render fav(kind)}</div>
        {/each}
        <div class="current">
            <svg width="12" height="12" viewBox="0 0 12 12"><path d="M1 1 11 11M11 1 1 11" stroke="#111" stroke-width="1.400" /></svg>
        </div>
        {#each tabs as kind}
            <div class="tab" class:loud={kind.endsWith('!')}>{@render fav(kind.replace('!', ''))}</div>
        {/each}
        <svg class="newtab" width="18" height="18" viewBox="0 0 18 18"><path d="M9 0V18M0 9H18" stroke="#111" stroke-width="1.400" /></svg>
        <div class="window-buttons">
            <svg width="14" height="14" viewBox="0 0 14 14"><path d="M0 7H14" stroke="#111" stroke-width="1.300" /></svg>
            <svg width="14" height="14" viewBox="0 0 14 14" fill="none" stroke="#111" stroke-width="1.200"><rect x="1" y="3" width="10" height="10" rx="2" /><path d="M4 1H10Q13 1 13 4V10" /></svg>
            <svg width="14" height="14" viewBox="0 0 14 14"><path d="M1 1 13 13M13 1 1 13" stroke="#111" stroke-width="1.300" /></svg>
        </div>
    </div>

    <div class="browser">
        <div class="page">
            <div class="toolbar">
                <div class="nav">
                    <svg width="21" height="22" viewBox="0 0 21 22" fill="none" stroke="#222" stroke-width="1.500"><path d="M21 11H1M10 2 1 11 10 20" /></svg>
                    <svg width="22" height="22" viewBox="0 0 22 22" fill="none" stroke="#222" stroke-width="1.600"><path d="M20 11A9 9 0 1 1 16 3.500L19 6M20 1V7H14" /></svg>
                </div>
                <div class="address">
                    <svg width="16" height="20" viewBox="0 0 16 20" fill="none" stroke="#666" stroke-width="1.300"><rect x="1" y="7" width="14" height="12" rx="2" /><path d="M5 7V4Q5 1 8 1T11 4V7" /><circle cx="8" cy="13" r="1" fill="#666" /></svg>
                    <div class="url">https://<b>fxdreema.com</b>/builder</div>
                    <div class="tools">
                        <svg width="20" height="20" viewBox="0 0 20 20" fill="none" stroke="#666" stroke-width="1.300"><path d="M1 18 7 3 13 18M3 13H11M12 4Q14 6 13 9M15 2Q18 6 16 10" /></svg>
                        <svg width="22" height="22" viewBox="0 0 22 22" fill="none" stroke="#666" stroke-width="1.300" stroke-linejoin="round"><path d="M11 1.500 14 8 20.500 9 16 14 17 20.500 11 17.500 5 20.500 6 14 1.500 9 8 8z" /></svg>
                    </div>
                </div>
                <div class="actions">
                    <svg width="22" height="22" viewBox="0 0 22 22" fill="none" stroke="#222" stroke-width="1.500" stroke-linejoin="round"><path d="M5 4H9Q8 1 11 1T14 4H18V8Q15 8 15 11T18 14V19H14Q14 16.500 11.500 16.500T9 19H5V14Q1.500 14 1.500 11T5 8z" /></svg>
                    <div class="rule"></div>
                    <div class="spaced">
                        <svg width="22" height="22" viewBox="0 0 22 22" fill="none" stroke="#222" stroke-width="1.500"><path d="M9 4H4Q2 4 2 6V16Q2 18 4 18H9M13 4H18Q20 4 20 6V16Q20 18 18 18H13M11 1V21" /></svg>
                        <svg width="24" height="22" viewBox="0 0 24 22" fill="none" stroke="#222" stroke-width="1.400" stroke-linejoin="round"><path d="M16 8 13 8 10 2 7 8 2 9 6 13 5 19 10 16.500 12 17.500M15 8H22M14 12H22M14 16H22" /></svg>
                        <svg width="22" height="22" viewBox="0 0 22 22" fill="none" stroke="#222" stroke-width="1.400"><rect x="8" y="7" width="13" height="13" rx="3" /><path d="M14.500 10V17M11 13.500H18M5 15Q3 15 2 12L1 6Q1 4 3 3L11 1Q14 1 14 4" /></svg>
                        <svg width="24" height="24" viewBox="0 0 24 24" fill="none" stroke="#222" stroke-width="1.400"><path d="M2 11Q0 5 5 3 9 2 11 5 14 2 18 4 22 7 20 11M4 14 11 21M1 11H6L8 8 11 14 13 10H20" /><circle cx="18" cy="18" r="5" fill="#107c10" stroke="none" /><path d="M15.500 18 17.500 20 20.500 16" stroke="#fff" /></svg>
                        <svg width="28" height="28" viewBox="0 0 28 28"><circle cx="14" cy="14" r="14" fill="#d3d1cf" /><circle cx="14" cy="10.500" r="5.500" fill="#8a8886" /><path d="M5 22Q6 18 10 18H18Q22 18 23 22 14 30 5 22z" fill="#8a8886" /></svg>
                        <svg width="18" height="6" viewBox="0 0 18 6" fill="#222"><circle cx="2.500" cy="3" r="1.600" /><circle cx="9" cy="3" r="1.600" /><circle cx="15.500" cy="3" r="1.600" /></svg>
                    </div>
                </div>
            </div>
            <div class="bookmarks">
                {#each bookmarks as item}
                    <div class="bookmark">{@render mark(item[0])}<span>{item[1]}</span></div>
                {/each}
                <svg width="10" height="16" viewBox="0 0 10 16"><path d="M1 1 8 8 1 15" fill="none" stroke="#111" stroke-width="1.400" /></svg>
            </div>

            <div class="app">
                <div class="header">
                    <div class="logo">fxdreema</div>
                    <div class="menu">
                        {#each menu as item}
                            <div>{item}</div>
                        {/each}
                    </div>
                    <div class="build">
                        <div class="source">.mq4</div>
                        <div>.ex4</div>
                    </div>
                    <div class="events">
                        <div class="title">Events</div>
                        {#each events as event}
                            <div class="event" class:active={event.active} style="width: {event.width}px">
                                {event.name}{#if event.count}<small>{event.count}</small>{/if}
                            </div>
                        {/each}
                    </div>
                    <div class="account">
                        <div class="links">
                            <span>Instructions</span>
                            <span class="howto">How To</span>
                            <span class="forum">Forum</span>
                        </div>
                        <div class="credits">
                            <div class="left">355</div>
                            <div class="plan">Full</div>
                        </div>
                        <div class="history">History</div>
                    </div>
                </div>

                <div class="sidebar">
                    <div class="project">Timer</div>
                    <div class="bar"><span class="count">0</span>Constants (Inputs)</div>
                    <div class="bar vars"><span class="count">3</span>Variables</div>
                    <div class="bar libs">
                        <div class="lib">System<div class="toggle on"></div></div>
                        <div class="lib custom">Custom<div class="toggle"></div></div>
                    </div>
                    <div class="library">
                        <div class="list">
                            <div class="group bucket">Bucket of Trades & Orders</div>
                            <div class="group">Loop for Trades & Orders</div>
                            {#each blocks as block, i}
                                <div class="block" class:loop={i < 3}>{block}</div>
                            {/each}
                        </div>
                        <div class="scroll"><div class="thumb"></div></div>
                    </div>
                </div>

                <svg class="settings" width="60" height="60" viewBox="0 0 60 60">
                    <defs>
                        <linearGradient id="plate" x1="0" y1="0" x2="0" y2="1"><stop offset="0" stop-color="#777" /><stop offset="1" stop-color="#929292" /></linearGradient>
                        <linearGradient id="steel" x1="0" y1="1" x2="1" y2="0"><stop offset=".35" stop-color="#aaa" /><stop offset=".5" stop-color="#858585" /><stop offset=".62" stop-color="#b5b5b5" /></linearGradient>
                    </defs>
                    <rect x="1" y="1" width="58" height="58" rx="7" fill="#bbb" stroke="#2b2b2b" stroke-width="2" />
                    <rect x="3" y="3" width="54" height="54" rx="5" fill="url(#plate)" />
                    <path d="M22 8Q37 4 44 17 48 26 46 36L57 46V57H43L34 47Q18 50 9 36 5 27 9 19L21 32 34 21z" fill="url(#steel)" stroke="#555" stroke-width="1.200" />
                </svg>

                <div class="node node7"><div class="number">7</div><div class="name">For each Trade</div></div>
                <div class="node node8"><div class="number">8</div><div class="name">pips away from open-price</div></div>
                <svg class="wire" width="280" height="140" viewBox="900 260 280 140">
                    <defs>
                        <linearGradient id="wire" x1="0" y1="0" x2="0" y2="1"><stop offset=".2" stop-color="#ff7722" /><stop offset=".7" stop-color="#ffd9cc" /></linearGradient>
                        <linearGradient id="port" x1="0" y1="0" x2="0" y2="1"><stop offset="0" stop-color="#f2e4f2" /><stop offset="1" stop-color="#bba8bb" /></linearGradient>
                    </defs>
                    <path d="M1046 280A10 10 0 0 1 1066 280z" fill="url(#port)" />
                    <path d="M1042 349A10 10 0 0 1 1062 349z" fill="url(#port)" />
                    <path d="M1046 303A10 10 0 0 0 1066 303zM1042 371A10 10 0 0 0 1062 371z" fill="#ff5500" />
                    <path d="M1080 303A10 10 0 0 0 1100 303zM1097 371A10 10 0 0 0 1117 371z" fill="#f5c400" />
                    <path d="M1056 312Q1056 320 1054.500 326T1053 340" stroke="url(#wire)" stroke-width="2.500" fill="none" />
                </svg>

                <div class="dialog">
                    <div class="vartab">Variables</div>
                    <div class="caption">
                        <svg width="20" height="20" viewBox="0 0 20 20"><path d="M4 4 16 16M16 4 4 16" stroke="#222" stroke-width="6.500" /><path d="M4 4 16 16M16 4 4 16" stroke="#8d8d8d" stroke-width="4.500" /></svg>
                        <svg width="34" height="26" viewBox="0 0 34 26"><path d="M5 22 18 13" stroke="#bbb" stroke-width="2" /><path d="M13 9Q16 6 19 9L24 5Q23 2 27 2 32 3 32 8 29 10 27 9L24 14Q25 17 22 18 14 17 13 9z" fill="#9ba0a3" stroke="#555" stroke-width=".6" /><path d="M16 9 21 15M20 9 26 4" stroke="#dfe4e6" stroke-width="1.800" /></svg>
                        <span>pips away from open-...</span>
                    </div>
                    <div class="body">
                        <div class="panel">
                            <div class="note">Remember: This block needs one of the</div>
                            {#each params as param}
                                <div class="row">
                                    <div class="label">{param[0]}</div>
                                    {@render select(param[1])}
                                    <div class="check"></div>
                                </div>
                            {/each}
                            <div class="line"></div>
                            <div class="row">
                                <div class="label">Pips away mode</div>
                                {@render select('Custom (price fraction)')}
                                <div class="check"></div>
                            </div>
                            <div class="hint">Custom (price fraction)</div>
                            <div class="inner">
                                {@render select('Indicator', true)}
                                {@render select('Average True Range')}
                                <div class="field first"><span>ATR period</span><div class="num">{atrPeriod}</div><div class="check"></div></div>
                                <div class="more">
                                    <div class="strip">More settings</div>
                                    <div class="field"><span>Symbol</span><div class="num"></div><div class="check dim"></div></div>
                                    <div class="field"><span>Timeframe</span>{@render select('Daily')}<div class="check"></div></div>
                                    <div class="field"><span>Candle ID</span><div class="num focus">{candleId}</div><div class="check"></div></div>
                                </div>
                                <div class="strip adjust">Adjust</div>
                            </div>
                        </div>
                        <div class="status">Change Status to<div class="tick"></div><div class="text"></div></div>
                        <div class="buttons"><div>Update</div><div class="delete">Delete</div></div>
                    </div>
                </div>
            </div>
        </div>

        <div class="edgebar">
            <svg class="copilot" width="30" height="32" viewBox="0 0 30 32">
                <defs>
                    <linearGradient id="cp1" x1="0" y1="0" x2="0" y2="1"><stop offset="0" stop-color="#1a7fe0" /><stop offset=".5" stop-color="#2ba8c8" /><stop offset="1" stop-color="#5ad08a" /></linearGradient>
                    <linearGradient id="cp2" x1="0" y1="0" x2="0" y2="1"><stop offset="0" stop-color="#2a6fe0" /><stop offset="1" stop-color="#18b4f5" /></linearGradient>
                </defs>
                <path d="M7 1H18Q20 1 21 4L22 9H17Q14 9 13 12L10 21Q9 23 7 23H3Q0 23 1 19L4 5Q5 1 7 1z" fill="url(#cp1)" />
                <path d="M23 9H27Q30 10 29 14L26 27Q25 31 22 31H12Q10 31 9 28L8 23H13Q16 23 17 20L20 11Q21 9 23 9z" fill="url(#cp2)" />
            </svg>
            {#each side as kind}
                <div class="icon {kind}">{@render sideIcon(kind)}</div>
            {/each}
            <div class="bottom">
                <svg width="20" height="20" viewBox="0 0 20 20" fill="none" stroke="#222" stroke-width="1.500"><rect x="1.500" y="3" width="17" height="14" rx="2.500" /><path d="M13 3V17" /></svg>
                <svg width="22" height="22" viewBox="0 0 22 22" fill="none" stroke="#222" stroke-width="1.400" stroke-linejoin="round"><path d="M9 1H13L14 4.500 18 3.500 20.500 7 18 11 20.500 15 18 18.500 14 17.500 13 21H9L8 17.500 4 18.500 1.500 15 4 11 1.500 7 4 3.500 8 4.500z" /><circle cx="11" cy="11" r="3" /></svg>
            </div>
        </div>
    </div>

    <div class="taskbar">
        <div class="weather">
            <svg width="36" height="38" viewBox="0 0 36 38"><circle cx="16" cy="21" r="14" fill="#f09020" /><path d="M2 16Q0 10 6 9 8 4 13 7L18 16z" fill="#b8d0f5" /><path d="M15 32Q13 27 18 26 22 20 27 25 32 25 31 31 30 33 15 32z" fill="#c5d8f8" /><circle cx="25" cy="10" r="10" fill="#c42b1c" /><text x="25" y="15" text-anchor="middle" font-size="13" fill="#fff">1</text></svg>
        </div>
        <svg width="29" height="30" viewBox="0 0 29 30">
            <defs><linearGradient id="start" x1="0" y1="0" x2="1" y2="1"><stop offset="0" stop-color="#7adcff" /><stop offset="1" stop-color="#0898f8" /></linearGradient></defs>
            <path d="M0 1H14V14.500H0zM15 1H29V14.500H15zM0 15.500H14V29H0zM15 15.500H29V29H15z" fill="url(#start)" />
        </svg>
        <div class="search">
            <svg width="22" height="22" viewBox="0 0 22 22" fill="none" stroke="#222" stroke-width="2"><circle cx="10" cy="9" r="7" /><path d="M15 14 20 20" /></svg>
            <span>Search</span>
            <svg width="52" height="34" viewBox="0 0 52 34">
                <path d="M7 33Q4 22 9 12 14 2 22 2T35 12Q40 22 38 33z" fill="#1c7390" />
                <path d="M10 14H16M8 19H15M7 24H15M7 29H16M34 14H29M37 19H30M38 24H30M38 29H30M13 8H31M17 4H27" stroke="#f0c050" stroke-width="2" />
                <ellipse cx="22.500" cy="16" rx="7" ry="8" fill="#dba55a" /><path d="M18 14H21M24 14H27M20 20H25" stroke="#432" stroke-width="1.300" /><path d="M20 24H25V33H20z" fill="#2986a8" /><path d="M15 29Q22 34 30 29" stroke="#f0c050" stroke-width="2" fill="none" />
                <path d="M2 33V22L5 28V33M38 27 46 18Q52 13 48 11T42 16" stroke="#2986a8" stroke-width="2.500" fill="none" stroke-dasharray="3 1" />
            </svg>
        </div>
        <svg class="taskview" width="30" height="30" viewBox="0 0 30 30"><rect y="9" width="22" height="20" rx="1" fill="#666" /><rect x="8" y="2" width="22" height="20" rx="1" fill="#eee" /><path d="M8 9H22V22H8z" fill="#aaa" /></svg>
        <svg class="chat" width="38" height="38" viewBox="0 0 38 38"><path d="M14 8A14 14 0 1 1 7 34L1 35 2 28A14 14 0 0 1 14 8z" fill="#6461c8" /><rect x="6" y="16" width="12" height="11" rx="2" fill="#fff" /><path d="M19 20 23 17V26L19 23z" fill="#fff" /><circle cx="26" cy="10" r="10" fill="#4cc2ff" /><text x="26" y="15" text-anchor="middle" font-size="13" fill="#111">1</text></svg>
        {#each apps as app}
            <div class="program" class:active={app.active}>
                {@render program(app.icon)}
                {#if app.badge}<div class="badge">{app.badge}</div>{/if}
                {#if app.open}<div class="dot"></div>{/if}
            </div>
        {/each}
        <div class="tray">
            <svg class="more-icons" width="14" height="10" viewBox="0 0 14 10"><path d="M1 8 7 2 13 8" fill="none" stroke="#fff" stroke-width="1.700" /></svg>
            <svg width="20" height="18" viewBox="0 0 20 18" fill="none" stroke="#fff" stroke-width="1.500"><path d="M1 6Q10-2 19 6" opacity=".4" /><path d="M3.500 9Q10 3 16.500 9M6 12Q10 8.500 14 12" /><circle cx="10" cy="15" r="1.300" fill="#fff" /></svg>
            <svg width="20" height="20" viewBox="0 0 20 20" fill="none" stroke="#fff" stroke-width="1.300"><path d="M1 7H4L9 3V17L4 13H1zM12 7Q13.500 10 12 13M14.500 5Q17.500 10 14.500 15M17 3Q21 10 17 17" /></svg>
            <svg width="21" height="18" viewBox="0 0 21 18" fill="none" stroke="#fff" stroke-width="1.500"><path d="M8 4H16Q18 4 18 6V13Q18 15 16 15H4Q2 15 2 13V10" /><rect x="5" y="7" width="10" height="5.500" fill="#fff" /><path d="M20 8V11" /><path d="M4 0 1 6H3L2 10 7 4H5L6 0z" fill="#fff" stroke="none" /></svg>
            <div class="clock">13:01<br>05/11/2023</div>
            <div class="bubble">16</div>
        </div>
    </div>
</div>
